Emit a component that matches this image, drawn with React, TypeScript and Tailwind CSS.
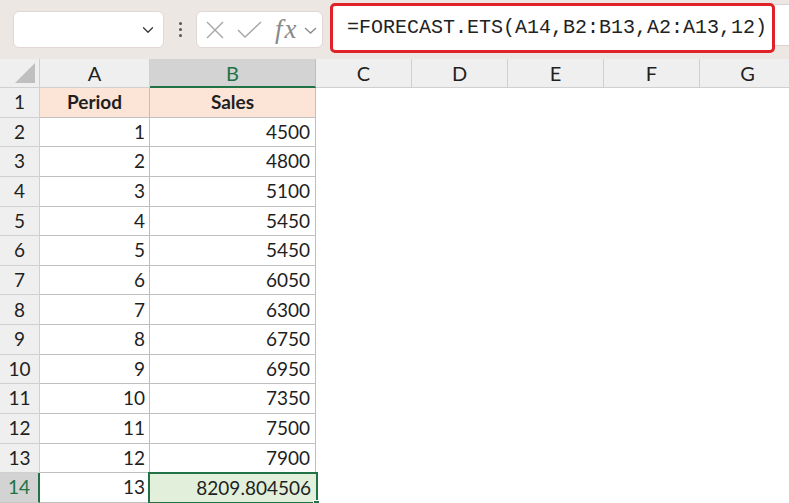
import { ChevronDown } from 'lucide-react';

const rows = [
  { n: 1, a: 'Period', b: 'Sales' },
  { n: 2, a: '1', b: '4500' },
  { n: 3, a: '2', b: '4800' },
  { n: 4, a: '3', b: '5100' },
  { n: 5, a: '4', b: '5450' },
  { n: 6, a: '5', b: '5450' },
  { n: 7, a: '6', b: '6050' },
  { n: 8, a: '7', b: '6300' },
  { n: 9, a: '8', b: '6750' },
  { n: 10, a: '9', b: '6950' },
  { n: 11, a: '10', b: '7350' },
  { n: 12, a: '11', b: '7500' },
  { n: 13, a: '12', b: '7900' },
  { n: 14, a: '13', b: '8209.804506' },
];

const otherCols = ['C', 'D', 'E', 'F', 'G'];

export default function App() {
  return (
    <div className="w-[789px] h-[503px] overflow-hidden bg-white font-['Lato','Liberation_Sans',sans-serif] text-[19px] text-[#1f1f1f]">
      {/* Formula bar */}
      <div className="h-[59px] bg-[#ede7e3] flex items-start">
        <div className="ml-[13px] mt-[11px] w-[151px] h-[37px] shrink-0 bg-white rounded-md border border-[#e0d8d4] flex items-center justify-end pr-[6px]">
          <ChevronDown className="w-[18px] h-[18px] text-[#333]" strokeWidth={1.6} />
        </div>
        <div className="w-[32px] h-[59px] shrink-0 flex flex-col items-center justify-center gap-[3px]">
          <span className="w-[3px] h-[3px] rounded-full bg-[#555]" />
          <span className="w-[3px] h-[3px] rounded-full bg-[#555]" />
          <span className="w-[3px] h-[3px] rounded-full bg-[#555]" />
        </div>
        <div className="mt-[11px] w-[127px] h-[37px] shrink-0 bg-white rounded-md border border-[#e0d8d4] flex items-center pl-[8px]">
          <svg width="20" height="20" viewBox="0 0 20 20" className="text-[#a6a6a6]">
            <path d="M2 2 L18 18 M18 2 L2 18" stroke="currentColor" strokeWidth="1.4" fill="none" />
          </svg>
          <svg width="26" height="20" viewBox="0 0 26 20" className="ml-[12px] text-[#a6a6a6]">
            <path d="M1 10 L8 17 L24 2" stroke="currentColor" strokeWidth="1.4" fill="none" />
          </svg>
          <span className="ml-[12px] font-['Liberation_Serif',serif] italic text-[27px] tracking-[2px] text-[#8a8a8a] leading-none">fx</span>
          <svg width="13" height="10" viewBox="0 0 13 10" className="ml-[5px] text-[#8a8a8a]">
            <path d="M1 3 L6.5 8 L12 3" stroke="currentColor" strokeWidth="1.3" fill="none" />
          </svg>
        </div>
        <div className="ml-[7px] mt-[3px] w-[445px] h-[50px] shrink-0 border-[3px] border-[#df2228] rounded-[5px] bg-white flex items-center pl-[14px] font-['Liberation_Mono',monospace] text-[20px] text-[#222] whitespace-nowrap">
          =FORECAST.ETS(A14,B2:B13,A2:A13,12)
        </div>
        <div className="flex-1 mt-[4px] h-[42px] bg-white border-y border-[#d9d2ce]" />
      </div>

      {/* Column headers */}
      <div className="flex h-[29px] bg-[#efefef]">
        <div className="w-[40px] shrink-0 border-r border-b border-[#d0d0d0] flex items-end justify-end pr-[4px] pb-[4px]">
          <svg width="20" height="20" viewBox="0 0 20 20">
            <path d="M20 0 L20 20 L0 20 Z" fill="#bfbfbf" />
          </svg>
        </div>
        <div className="w-[110px] shrink-0 border-r border-b border-[#d0d0d0] flex items-center justify-center text-[20px]">A</div>
        <div className="w-[166px] shrink-0 bg-[#d3d3d3] border-r border-[#bfbfbf] border-b-2 border-b-[#217346] flex items-center justify-center text-[#217346] text-[20px]">B</div>
        {otherCols.map((c) => (
          <div key={c} className="w-[96px] shrink-0 border-r border-b border-[#d0d0d0] flex items-center justify-center text-[20px]">
            {c}
          </div>
        ))}
      </div>

      {/* Rows */}
      {rows.map((r) => {
        const head = r.n === 1;
        const sel = r.n === 14;
        return (
          <div key={r.n} className="flex h-[29.65px]">
            <div
              className={
                sel
                  ? 'w-[40px] shrink-0 bg-[#d3d3d3] border-b border-[#c8c8c8] border-r-2 border-r-[#217346] flex items-center justify-center text-[#217346]'
                  : 'w-[40px] shrink-0 bg-[#efefef] border-r border-b border-[#d0d0d0] flex items-center justify-center'
              }
            >
              {r.n}
            </div>
            <div
              className={
                head
                  ? 'w-[110px] shrink-0 bg-[#fce4d6] border-r border-b border-[#bfbfbf] flex items-center justify-center font-bold'
                  : 'w-[110px] shrink-0 border-r border-b border-[#bfbfbf] flex items-center justify-end pr-[4px]'
              }
            >
              {r.a}
            </div>
            <div
              className={
                head
                  ? 'w-[166px] shrink-0 bg-[#fce4d6] border-r border-b border-[#bfbfbf] flex items-center justify-center font-bold'
                  : sel
                    ? 'relative w-[166px] shrink-0 bg-[#e2efda] flex items-center justify-end pr-[5px]'
                    : 'w-[166px] shrink-0 border-r border-b border-[#bfbfbf] flex items-center justify-end pr-[5px]'
              }
            >
              {r.b}
              {sel && (
                <>
                  <div className="absolute -left-[2px] -top-[1px] -right-[2px] -bottom-[1px] border-2 border-[#217346]" />
                  <div className="absolute -right-[4px] -bottom-[4px] w-[7px] h-[7px] bg-[#217346] border border-white" />
                </>
              )}
            </div>
          </div>
        );
      })}
    </div>
  );
}
